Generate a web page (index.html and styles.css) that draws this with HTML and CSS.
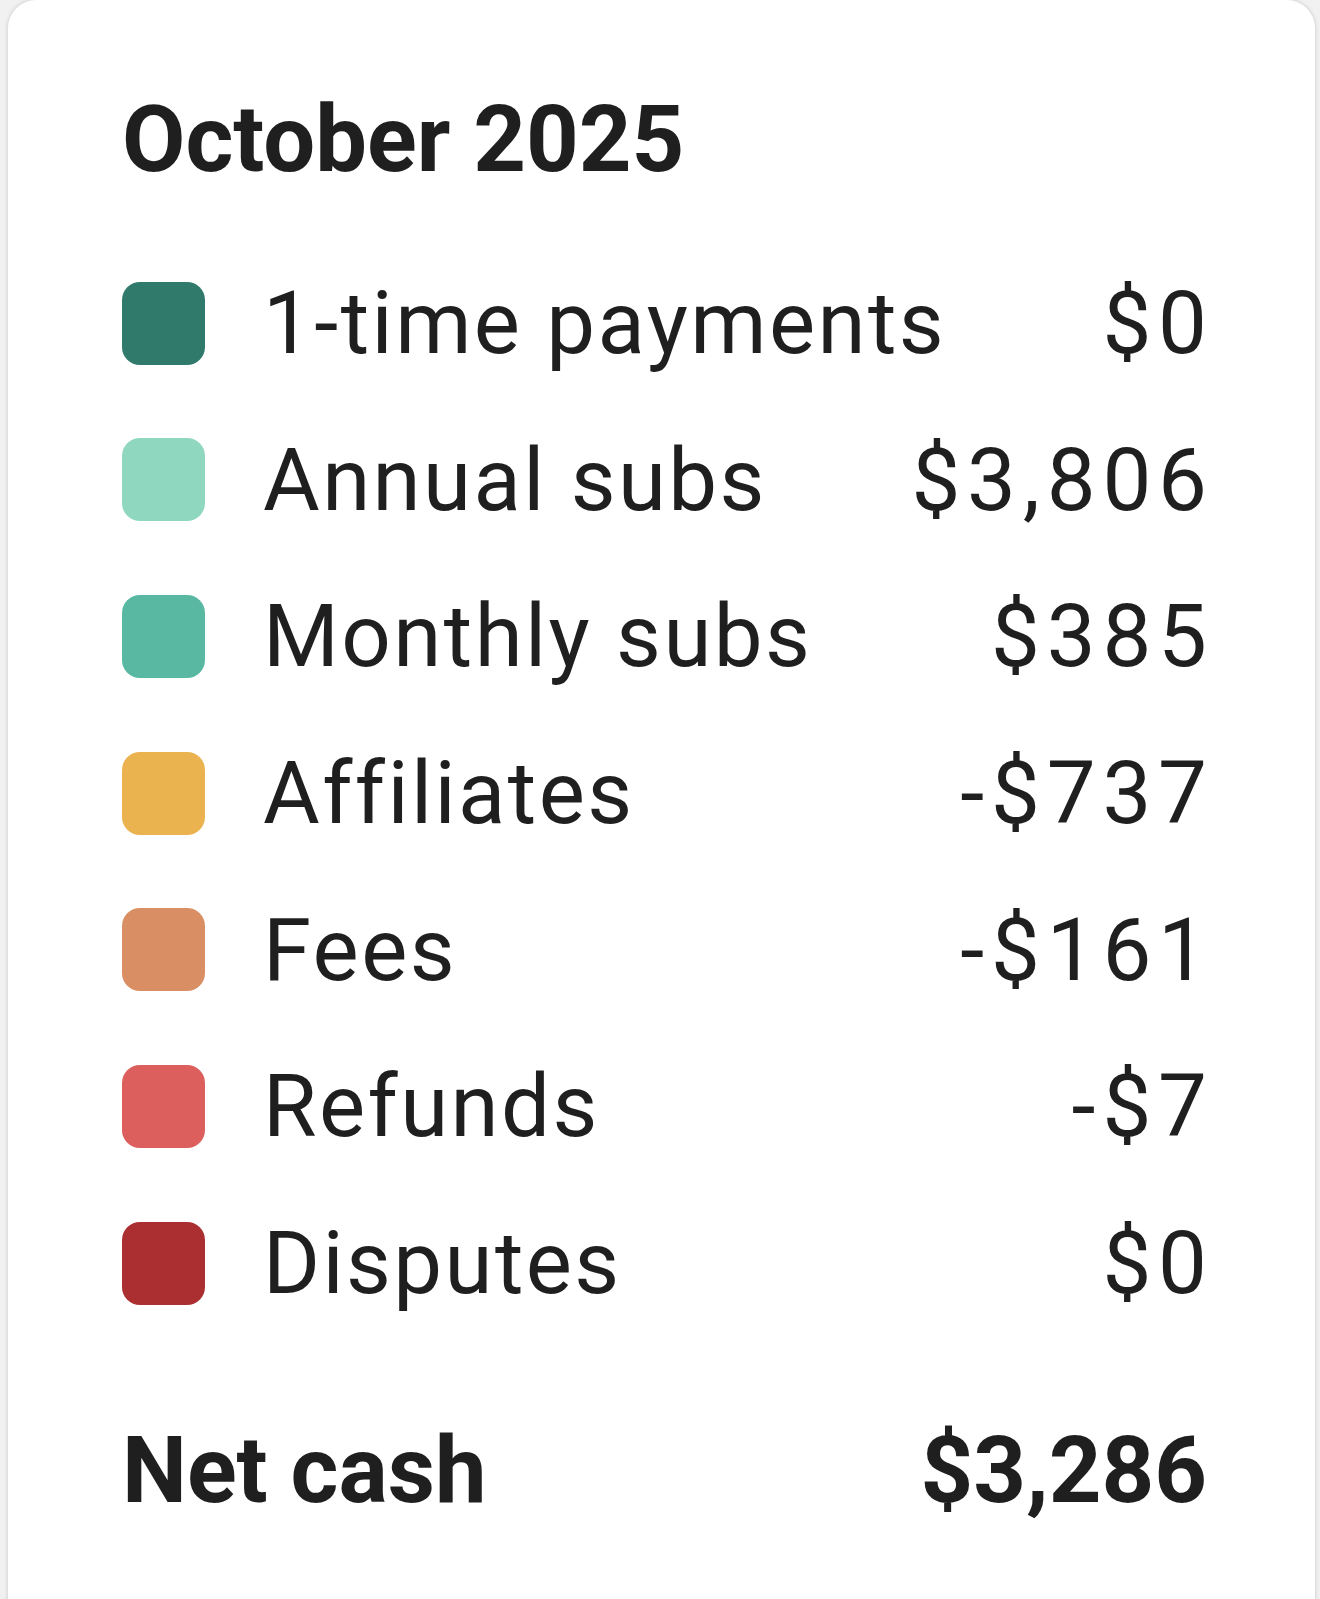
FILE: index.html
```html
<!DOCTYPE html>
<html lang="en">
<head>
<meta charset="utf-8">
<title>October 2025</title>
<link rel="stylesheet" href="styles.css">
</head>
<body>
<div class="card">
  <div class="title">October 2025</div>
  <ul class="rows">
    <li class="row"><span class="sw sw-onetime"></span><span class="label">1-time payments</span><span class="val">$0</span></li>
    <li class="row"><span class="sw sw-annual"></span><span class="label">Annual subs</span><span class="val">$3,806</span></li>
    <li class="row"><span class="sw sw-monthly"></span><span class="label">Monthly subs</span><span class="val">$385</span></li>
    <li class="row"><span class="sw sw-aff"></span><span class="label">Affiliates</span><span class="val">-$737</span></li>
    <li class="row"><span class="sw sw-fees"></span><span class="label">Fees</span><span class="val">-$161</span></li>
    <li class="row"><span class="sw sw-ref"></span><span class="label">Refunds</span><span class="val">-$7</span></li>
    <li class="row"><span class="sw sw-disp"></span><span class="label">Disputes</span><span class="val">$0</span></li>
  </ul>
  <div class="total"><span class="total-label">Net cash</span><span class="total-val">$3,286</span></div>
</div>
</body>
</html>
```
FILE: styles.css
```css
html, body {
  margin: 0;
  padding: 0;
}
body {
  background: #f1f1f1;
  font-family: Roboto, "Noto Sans", sans-serif;
  color: #1f1f1f;
  height: 1599px;
  overflow: hidden;
}
.card {
  margin-left: 8px;
  width: 1307px;
  height: 1640px;
  box-sizing: border-box;
  background: #ffffff;
  border-radius: 28px;
  box-shadow: 0 0 4px rgba(0,0,0,0.18);
  padding: 84px 108px 0 114px;
}
.title {
  font-weight: 700;
  font-size: 92px;
  line-height: 112px;
  height: 112px;
}
.rows {
  list-style: none;
  margin: 49px 0 0 0;
  padding: 0;
}
.row {
  display: flex;
  align-items: center;
  height: 156.67px;
  font-size: 87px;
  line-height: 1.2;
}
.sw {
  width: 83px;
  height: 83px;
  border-radius: 18px;
  flex: none;
  margin-right: 58px;
}
.label {
  flex: 1;
  white-space: nowrap;
  letter-spacing: 2.4px;
}
.val {
  white-space: nowrap;
  letter-spacing: 6.8px;
  margin-right: -6.8px;
}
.sw-onetime { background: #2f7a6b; }
.sw-annual { background: #8fd8bf; }
.sw-monthly { background: #59b8a1; }
.sw-aff { background: #ebb34f; }
.sw-fees { background: #d98f63; }
.sw-ref { background: #dc5f5e; }
.sw-disp { background: #ab2f30; }
.total {
  display: flex;
  align-items: center;
  height: 156.67px;
  margin-top: 51px;
  font-size: 92px;
  font-weight: 700;
  line-height: 1.2;
}
.total-label {
  flex: 1;
  white-space: nowrap;
}
.total-val {
  white-space: nowrap;
}
```
